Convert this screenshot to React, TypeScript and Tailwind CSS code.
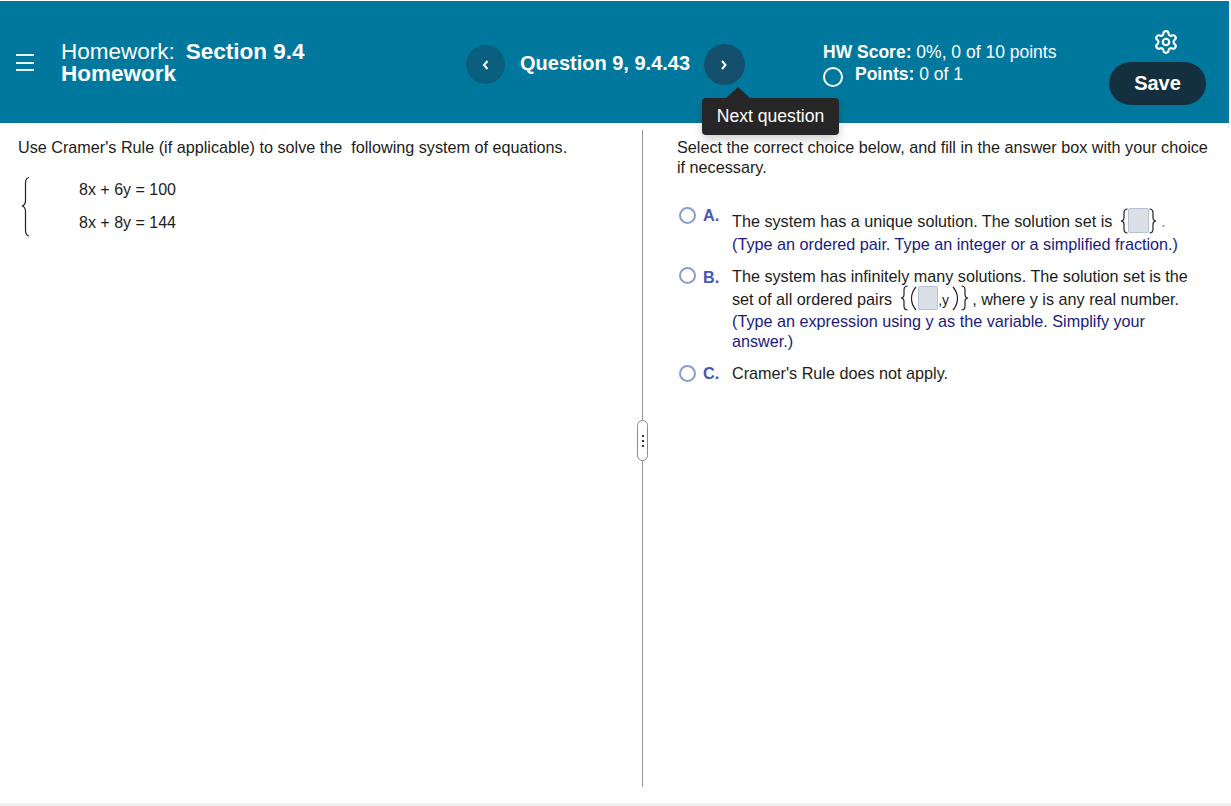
import { Settings } from 'lucide-react';
import type { ReactNode } from 'react';

const AnswerBox = ({ className = '' }: { className?: string }) => (
  <span className={`inline-block bg-[#dcdfe6] border border-[#b4c2d8] rounded-[2px] ${className}`} />
);

const Brace = ({ side }: { side: 'left' | 'right' }) => (
  <svg width="8" height="26" viewBox="0 0 8 26" className={`shrink-0 ${side === 'right' ? '-scale-x-100' : ''}`} fill="none" stroke="#222" strokeWidth="1.200">
    <path d="M7.500 1C5 1 4 2.500 4 5v4.500C4 11.500 3 13 .8 13 3 13 4 14.500 4 16.500V21c0 2.500 1 4 3.500 4" />
  </svg>
);

const Paren = ({ side }: { side: 'left' | 'right' }) => (
  <svg width="7" height="25" viewBox="0 0 7 25" className={`shrink-0 ${side === 'right' ? '-scale-x-100' : ''}`} fill="none" stroke="#222" strokeWidth="1.200">
    <path d="M6 1C2.500 5 1.500 8.500 1.500 12.500s1 7.500 4.500 11.500" />
  </svg>
);

function Choice({ letter, radioTop, labelTop, children, className = '' }: { letter: string; radioTop: string; labelTop: string; children: ReactNode; className?: string }) {
  return (
    <div className={`flex ${className}`}>
      <span className={`w-[17px] h-[17px] shrink-0 rounded-full border-2 border-[#8b9bd4] ${radioTop}`} />
      <span className={`w-[36px] h-[20px] pl-[7px] shrink-0 font-bold text-[#4557b8] leading-[20px] ${labelTop}`}>{letter}.</span>
      <div className="flex-1 leading-[20px]">{children}</div>
    </div>
  );
}

export default function App() {
  return (
    <div className="h-[806px] w-[1231px] overflow-hidden flex flex-col bg-white text-[16.200px] text-[#1c1c1c] font-['Liberation_Sans',Arial,sans-serif]">
      <header className="relative mt-px mr-[2px] h-[122px] shrink-0 bg-[#00789e] text-white flex items-start">
        <div className="w-[61px] shrink-0 pl-[16px] pt-[53px]">
          <div className="w-[18px] flex flex-col gap-[5.500px]">
            <span className="h-[2px] bg-[#e6f4f8]" />
            <span className="h-[2px] bg-[#e6f4f8]" />
            <span className="h-[2px] bg-[#e6f4f8]" />
          </div>
        </div>

        <div className="w-[405px] shrink-0 pt-[40px] text-[22.500px] leading-[22px]">
          <div>
            <span>Homework:</span>
            <span className="font-bold ml-[11px]">Section 9.4</span>
          </div>
          <div className="font-bold">Homework</div>
        </div>

        <div className="w-[357px] shrink-0 pt-[43px] flex items-center">
          <button className="w-[39px] h-[39px] rounded-full bg-[#0b5f7e] flex items-center justify-center">
            <svg width="8" height="12" viewBox="0 0 8 12" fill="none" stroke="#fff" strokeWidth="2"><path d="M5.500 2 2 6l3.500 4" /></svg>
          </button>
          <span className="ml-[15px] mb-[4px] text-[20px] font-bold leading-[24px]">Question 9, 9.4.43</span>
          <button className="ml-[14px] w-[41px] h-[41px] pr-[1px] rounded-full bg-[#14506e] flex items-center justify-center">
            <svg width="8" height="12" viewBox="0 0 8 12" fill="none" stroke="#fff" strokeWidth="2"><path d="m2 2 3.500 4L2 10" /></svg>
          </button>
        </div>

        <div className="flex-1 pt-[40px] text-[17.500px] leading-[22px]">
          <div><span className="font-bold">HW Score:</span> 0%, 0 of 10 points</div>
          <div className="flex items-center">
            <span className="w-[20px] h-[20px] rounded-full border-[2.500px] border-white mt-[3px]" />
            <span className="ml-[12px] mb-[2px]"><span className="font-bold">Points:</span> 0 of 1</span>
          </div>
        </div>

        <div className="w-[120px] shrink-0 pt-[28px] pr-[23px] flex flex-col items-center">
          <Settings className="ml-[16px] w-[26px] h-[26px] text-white" strokeWidth={2} />
          <button className="mt-[7px] w-[97px] h-[43px] pb-[2px] rounded-full bg-[#14303f] text-[20px] font-bold">Save</button>
        </div>

        <div className="absolute left-[702px] top-[97px] z-10 w-[137px] h-[37px] rounded-[4px] bg-[#262626] text-white text-[17.600px] leading-[36px] text-center shadow-[0_4px_10px_rgba(0,0,0,0.2)]">
          Next question
          <span className="absolute left-[24px] -top-[11px] w-0 h-0 border-x-[12px] border-x-transparent border-b-[11px] border-b-[#262626]" />
        </div>
      </header>

      <main className="flex-1 flex items-stretch">
        <section className="relative w-[643px] shrink-0 mt-[7px] mb-[16px] border-r border-[#8e959b]">
          <div className="pl-[18px] pt-[7px] leading-[20px]">Use Cramer's Rule (if applicable) to solve the&nbsp; following system of equations.</div>
          <div className="flex pl-[18px] mt-[20px]">
            <svg width="14" height="62" viewBox="0 0 14 62" fill="none" stroke="#222" strokeWidth="1.200" className="shrink-0 -mt-px">
              <path d="M11 1.500C8 2 7.500 4 7.500 7v17c0 3-1 5.500-3.500 6 2.500.5 3.500 3 3.500 6v18c0 3 .5 5.500 3.500 6" />
            </svg>
            <div className="ml-[47px] leading-[20px] text-[16px]">
              <div className="mt-[3px]">8x + 6y = 100</div>
              <div className="mt-[13px]">8x + 8y = 144</div>
            </div>
          </div>
          <div className="absolute -right-[6px] top-[290px] w-[11px] h-[41px] rounded-[6px] border border-[#7f8c99] bg-white flex flex-col items-center justify-center gap-[3px]">
            <span className="w-[2px] h-[2px] bg-[#333]" />
            <span className="w-[2px] h-[2px] bg-[#333]" />
            <span className="w-[2px] h-[2px] bg-[#333]" />
          </div>
        </section>

        <section className="flex-1 pl-[34px] pr-[16px] pt-[14px]">
          <div className="leading-[20px]">Select the correct choice below, and fill in the answer box with your choice if necessary.</div>

          <div className="mt-[31px] pl-[2px] pr-[20px]">
            <Choice letter="A" radioTop="-mt-[1px]" labelTop="-mt-[3px]">
              <div className="flex items-center h-[26px]">
                The system has a unique solution. The solution set is
                <span className="ml-[8px] mb-[1px] flex items-center">
                  <Brace side="left" />
                  <AnswerBox className="w-[21px] h-[25px]" />
                  <Brace side="right" />
                  <span className="ml-[4px] text-[#888]">.</span>
                </span>
              </div>
              <div className="text-[#1a1a80]">(Type an ordered pair. Type an integer or a simplified fraction.)</div>
            </Choice>
            <Choice letter="B" radioTop="mt-px" labelTop="mt-px" className="mt-[12px]">
              <div>The system has infinitely many solutions. The solution set is the</div>
              <div className="flex items-center h-[26px]">
                set of all ordered pairs
                <span className="ml-[8px] mb-[2px] flex items-center">
                  <Brace side="left" />
                  <span className="ml-[2px]"><Paren side="left" /></span>
                  <AnswerBox className="w-[20px] h-[24px] ml-px" />
                  <span className="w-[14px] mt-[4px] text-[14px] leading-[20px]">,y</span>
                  <Paren side="right" />
                  <span className="ml-[2px]"><Brace side="right" /></span>
                </span>
                <span className="ml-[3px]">, where y is any real number.</span>
              </div>
              <div className="text-[#1a1a80] -mt-px">(Type an expression using y as the variable. Simplify your answer.)</div>
            </Choice>
            <Choice letter="C" radioTop="mt-[2px]" labelTop="mt-0" className="mt-[12px]">
              Cramer's Rule does not apply.
            </Choice>
          </div>
        </section>
      </main>

      <div className="h-[3px] shrink-0 bg-[#f0f0f0]" />
    </div>
  );
}
